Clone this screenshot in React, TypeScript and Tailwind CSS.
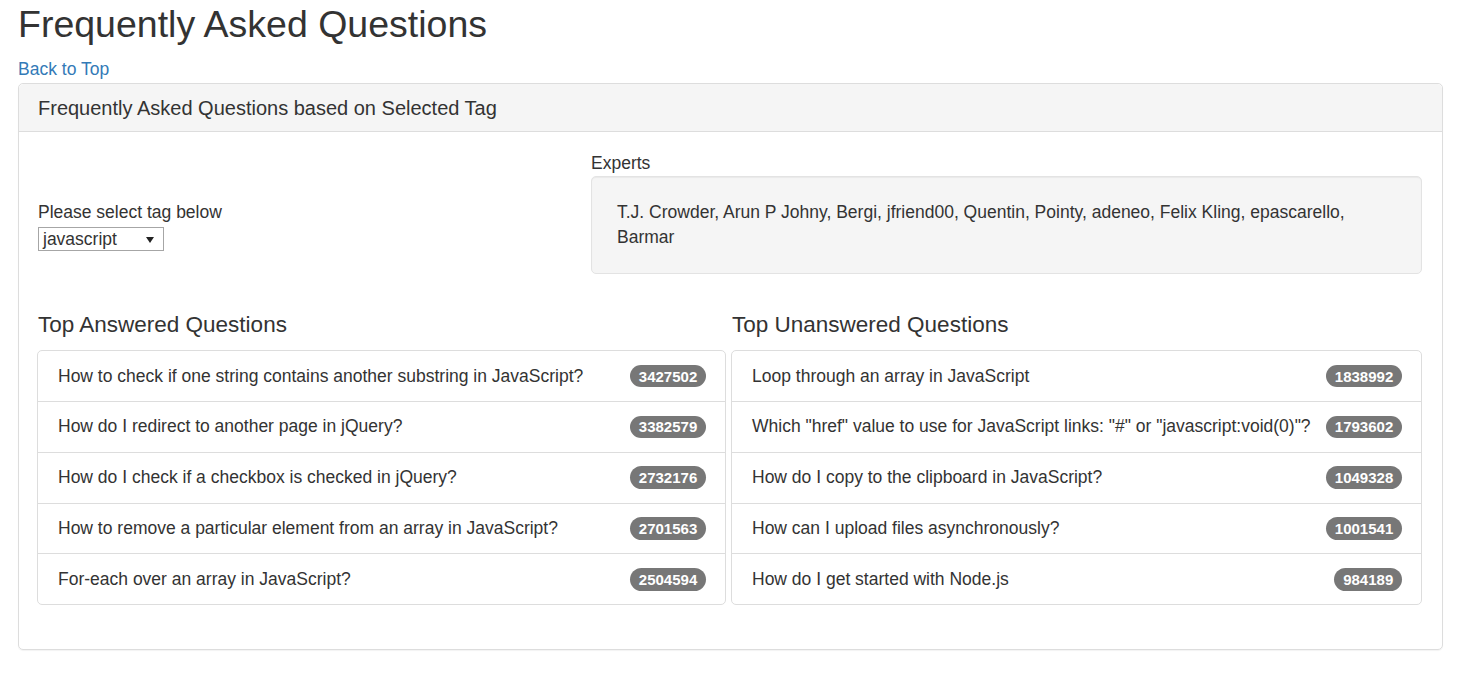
import React from 'react';

const answered = [
  { q: 'How to check if one string contains another substring in JavaScript?', n: 3427502 },
  { q: 'How do I redirect to another page in jQuery?', n: 3382579 },
  { q: 'How do I check if a checkbox is checked in jQuery?', n: 2732176 },
  { q: 'How to remove a particular element from an array in JavaScript?', n: 2701563 },
  { q: 'For-each over an array in JavaScript?', n: 2504594 },
];

const unanswered = [
  { q: 'Loop through an array in JavaScript', n: 1838992 },
  { q: 'Which "href" value to use for JavaScript links: "#" or "javascript:void(0)"?', n: 1793602 },
  { q: 'How do I copy to the clipboard in JavaScript?', n: 1049328 },
  { q: 'How can I upload files asynchronously?', n: 1001541 },
  { q: 'How do I get started with Node.js', n: 984189 },
];

const experts = [
  'T.J. Crowder', 'Arun P Johny', 'Bergi', 'jfriend00', 'Quentin',
  'Pointy', 'adeneo', 'Felix Kling', 'epascarello', 'Barmar',
];

function QuestionList({ title, items }: { title: string; items: { q: string; n: number }[] }) {
  return (
    <div>
      <h4 className="pl-[1px] mt-[13px] mb-[13px] text-[22.5px] leading-[25px] font-normal">{title}</h4>
      <ul className="border border-[#ddd] rounded-[5px] divide-y divide-[#ddd] bg-white">
        {items.map((item) => (
          <li key={item.n} className="flex items-center justify-between pl-[20px] pr-[19px] py-[12.4px]">
            <span>{item.q}</span>
            <span className="ml-2 shrink-0 bg-[#777] text-white font-bold text-[15px] leading-none px-[8.75px] py-[3.75px] rounded-[12.5px]">
              {item.n}
            </span>
          </li>
        ))}
      </ul>
    </div>
  );
}

export default function App() {
  return (
    <div className="min-h-screen bg-white pl-[18px] pr-[23px] text-[#333] text-[17.5px] leading-[25px] font-['Liberation_Sans',Arial,sans-serif]">
      <h1 className="pt-[4px] mb-[12px] text-[37.5px] leading-[41.25px] font-normal">Frequently Asked Questions</h1>
      <a href="#" className="block text-[#337ab7] leading-[25px]">Back to Top</a>

      {/* Panel */}
      <div className="mt-[1px] border border-[#ddd] rounded-[5px] shadow-[0_1px_1px_rgba(0,0,0,0.05)]">
        <div className="bg-[#f5f5f5] border-b border-[#ddd] rounded-t-[5px] px-[19px] py-[12.5px]">
          <h3 className="text-[20px] leading-[22px] font-normal">Frequently Asked Questions based on Selected Tag</h3>
        </div>

        <div className="px-[19px] pt-[18px] pb-[19px]">
          <div className="grid grid-cols-[553px_1fr]">
            <div className="pt-[50px]">
              <div>Please select tag below</div>
              <div className="mt-[2px] flex items-center justify-between w-[126px] h-[24px] border border-[#a6a6a6] bg-white pl-[4px] pr-[9px]">
                <span className="leading-[20px]">javascript</span>
                <svg width="8" height="6" viewBox="0 0 8 6" className="mt-[1px]">
                  <path d="M0 0 L8 0 L4 6 Z" fill="#222" />
                </svg>
              </div>
            </div>
            <div className="pt-[1px]">
              <div>Experts</div>
              <div className="mr-[1px] mb-[25px] bg-[#f5f5f5] border border-[#e3e3e3] rounded-[5px] pl-[25px] pr-[24px] py-[23px] shadow-[inset_0_1px_1px_rgba(0,0,0,0.05)]">
                {experts.join(', ')}
              </div>
            </div>
          </div>

          <div className="-ml-[1px] mr-[1px] mb-[25px] grid grid-cols-[689px_1fr] gap-[5px]">
            <QuestionList title="Top Answered Questions" items={answered} />
            <QuestionList title="Top Unanswered Questions" items={unanswered} />
          </div>
        </div>
      </div>
    </div>
  );
}
